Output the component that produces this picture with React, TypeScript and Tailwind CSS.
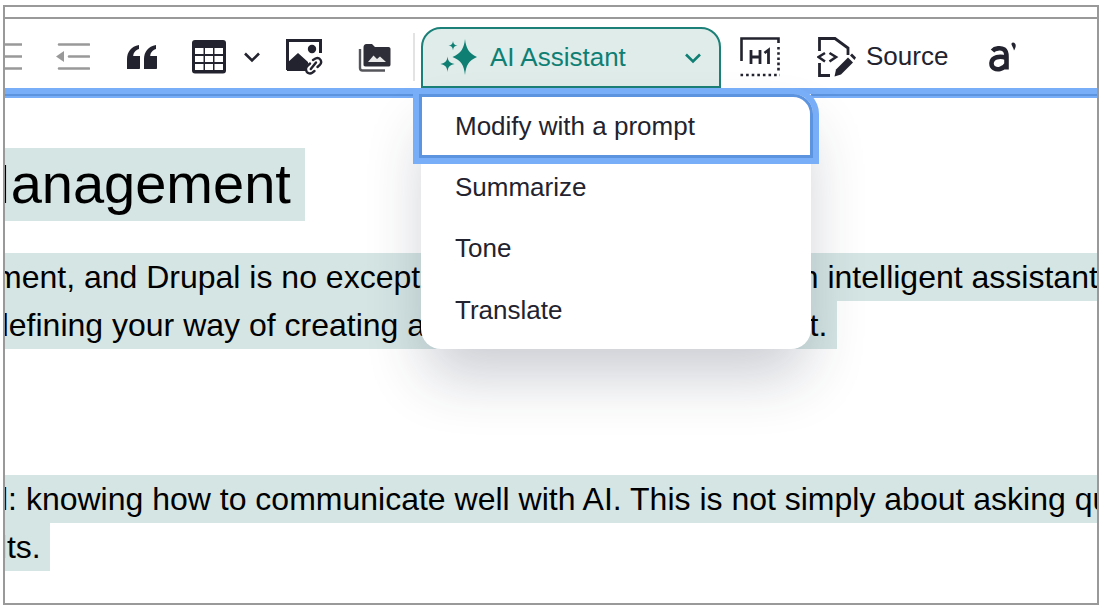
const ink = "#23232f";

function ListIcon() {
  return (
    <svg width="18" height="30" viewBox="0 0 18 30" className="shrink-0">
      <path d="M0 2.5H18M0 14.5H18M0 26.5H18" stroke="#999" strokeWidth="2.6" strokeLinecap="round" />
    </svg>
  );
}

function OutdentIcon() {
  return (
    <svg width="34" height="30" viewBox="0 0 34 30" className="shrink-0">
      <path d="M3 2.5H33M13 14.5H33M3 26.5H33" stroke="#999" strokeWidth="2.6" strokeLinecap="round" />
      <path d="M0 14.5L8 9V20Z" fill="#999" />
    </svg>
  );
}

function QuoteIcon() {
  return (
    <svg width="30" height="25" viewBox="0 0 30 25" className="shrink-0">
      <path
        d="M0 24V14C0 7 4 1.5 12 0V4C8 5.5 6.5 8 6.2 11H13V23C13 23.6 12.6 24 12 24ZM17 24V14C17 7 21 1.5 29 0V4C25 5.5 23.5 8 23.2 11H30V23C30 23.6 29.6 24 29 24Z"
        fill={ink}
      />
    </svg>
  );
}

function TableIcon() {
  return (
    <svg width="34" height="34" viewBox="0 0 34 34" className="shrink-0">
      <rect width="34" height="33.5" rx="3" fill={ink} />
      <g fill="#fff">
        <rect x="3" y="8" width="8.5" height="6" />
        <rect x="13" y="8" width="8" height="6" />
        <rect x="22.5" y="8" width="8.5" height="6" />
        <rect x="3" y="16" width="8.5" height="6" />
        <rect x="13" y="16" width="8" height="6" />
        <rect x="22.5" y="16" width="8.5" height="6" />
        <rect x="3" y="24" width="8.5" height="6" />
        <rect x="13" y="24" width="8" height="6" />
        <rect x="22.5" y="24" width="8.5" height="6" />
      </g>
    </svg>
  );
}

function Chevron({ color }: { color: string }) {
  return (
    <svg width="18" height="12" viewBox="0 0 18 12" className="shrink-0">
      <path d="M2 2.5L9 9.5L16 2.5" fill="none" stroke={color} strokeWidth="2.6" />
    </svg>
  );
}

function ImageLinkIcon() {
  return (
    <svg width="37" height="37" viewBox="0 0 37 37" className="shrink-0">
      <path d="M1.5 31V1.5H34.5V14" fill="none" stroke={ink} strokeWidth="3" />
      <path d="M1 24L12 14L22 23V25C20 27 20 29 20.5 32H1Z" fill={ink} />
      <circle cx="26" cy="10" r="4.2" fill={ink} />
      <g fill="none" stroke={ink} strokeWidth="2.4" strokeLinecap="round">
        <path d="M27 21L29.5 19.5C31.5 18.6 33.6 19.2 34.6 21C35.6 23 35 25 33.5 26.2L31.5 28" />
        <path d="M24 24.5L21.8 26.5C20 28 19.6 30.5 20.6 32.6C21.8 34.6 24.4 35 26.2 33.8L28.5 32" />
        <path d="M24.8 30L30 23.5" />
      </g>
    </svg>
  );
}

function FolderImagesIcon() {
  return (
    <svg width="33" height="29" viewBox="0 0 33 29" className="shrink-0">
      <path d="M2 6V25C2 26.5 3 27.5 4.5 27.5H27" fill="none" stroke="#55555c" strokeWidth="2.4" />
      <path d="M5.5 4.5C5.5 2.5 6.5 1 8.5 1H14L17 4H30.5C32 4 32.5 5 32.5 6V21.5C32.5 23 31.5 23.5 30.5 23.5H7.5C6 23.5 5.5 22.5 5.5 21.5Z" fill="#2e2e38" />
      <path d="M10 19L15.5 12.5L19 16L22 13.5L28 19Z" fill="#e8e8e8" />
    </svg>
  );
}

function SparkleIcon() {
  return (
    <svg width="38" height="38" viewBox="0 0 38 38" className="shrink-0">
      <g fill="#0f7f74">
        <path d="M25 0C26 9 28.5 14 37 18C28.5 21.5 26 26.5 25 36C24 26.5 21.5 21.5 12.5 18C21.5 14 24 9 25 0Z" />
        <path d="M13 2C13.4 5 14.5 6.2 17.5 6.6C14.5 7 13.4 8.2 13 11.2C12.6 8.2 11.5 7 8.5 6.6C11.5 6.2 12.6 5 13 2Z" />
        <path d="M7.5 17.5C8 22 9.5 24 14.5 25C9.5 26 8 28 7.5 33C7 28 5.5 26 0.5 25C5.5 24 7 22 7.5 17.5Z" />
      </g>
    </svg>
  );
}

function HeadingIcon() {
  return (
    <svg width="40" height="40" viewBox="0 0 40 40" className="shrink-0">
      <path d="M1.5 24V1.5H38.5V6" fill="none" stroke={ink} strokeWidth="2.6" />
      <path d="M38.5 10V34" fill="none" stroke={ink} strokeWidth="2.6" strokeDasharray="2.6 2.6" />
      <path d="M0.5 38H40" fill="none" stroke={ink} strokeWidth="2.6" strokeDasharray="2.6 3" />
      <path d="M11 13V27M20 13V27M11 20H20" fill="none" stroke={ink} strokeWidth="2.8" />
      <path d="M24.5 16L28.5 13V27" fill="none" stroke={ink} strokeWidth="2.8" />
    </svg>
  );
}

function SourceIcon() {
  return (
    <svg width="39" height="40" viewBox="0 0 39 40" className="shrink-0">
      <path d="M2.5 14V1.5H18L31 11V18M2.5 26V38.5H13" fill="none" stroke={ink} strokeWidth="2.8" />
      <path d="M8 16L1.5 20L8 24.5M12.5 16L19 20L12.5 24.5" fill="none" stroke={ink} strokeWidth="2.6" />
      <path d="M17.5 39.5L19 32.5L31 20.5L36 25.5L24 37.5Z" fill={ink} />
      <path d="M33 18.5L35 16.5L39 20.5L37.5 23Z" fill={ink} />
    </svg>
  );
}

function BrandIcon() {
  return (
    <svg width="29" height="30" viewBox="0 0 29 30" className="shrink-0">
      <path
        d="M3.5 9C6 6 12 5.5 15 7.5C18 9.5 17.5 13 17.5 17V27.5M17 16C11 13.5 3 15 2.5 21C2.2 26 7 28 11 27C14 26.3 16.5 24 17.5 22"
        fill="none"
        stroke={ink}
        strokeWidth="4.6"
      />
      <path d="M24 0.5C27.5 1 27.5 5 25 8.5C24.5 6 23 4 22.5 2.5C22.3 1.3 23 0.5 24 0.5Z" fill={ink} />
    </svg>
  );
}

const menuItems = ["Summarize", "Tone", "Translate"];

function AssistantMenu() {
  return (
    <div className="relative ml-[6px] shrink-0 self-end">
      <div className="flex h-[61px] w-[300px] items-center rounded-t-[20px] border-2 border-[#1b8077] bg-[#dfecea] px-[17px] text-[#0f7f74]">
        <SparkleIcon />
        <span className="mb-[2px] ml-[12px] text-[26px] leading-none">AI Assistant</span>
        <div className="ml-auto">
          <Chevron color="#0f7f74" />
        </div>
      </div>
      <div className="absolute left-0 top-[67px] z-10 w-[390px] rounded-b-[20px] bg-white pb-[9px] text-[26px] text-[#23232f] shadow-[0_32px_60px_-6px_rgba(35,40,65,0.24)]">
        <div className="-mx-[2px] mb-[-1px] flex h-[64px] items-center rounded-tr-[20px] border-[3px] border-[#5c94e0] pl-[33px] shadow-[0_0_0_6px_#78aef7]">
          Modify with a prompt
        </div>
        <div className="flex h-[61px] items-center pl-[34px]">{menuItems[0]}</div>
        <div className="flex h-[61px] items-center pl-[34px]">{menuItems[1]}</div>
        <div className="flex h-[61px] items-center pl-[34px] pt-[1px]">{menuItems[2]}</div>
      </div>
    </div>
  );
}

function Highlighted({ children, className }: { children: React.ReactNode; className?: string }) {
  return <div className={`w-fit whitespace-nowrap bg-[#d5e5e4] ${className ?? ""}`}>{children}</div>;
}

export default function App() {
  return (
    <div className="h-[609px] w-[1103px] overflow-hidden bg-white pl-[3px] pt-[5px] font-['Liberation_Sans',Arial,sans-serif]">
      <div className="flex h-[600px] w-[1096px] flex-col overflow-hidden border-2 border-[#999]">
        <div className="h-[12px] shrink-0 border-b-2 border-[#999]" />

        {/* toolbar */}
        <div className="flex h-[69px] shrink-0 items-center pt-[7px]">
          <div className="ml-[-1px]"><ListIcon /></div>
          <div className="ml-[34px]"><OutdentIcon /></div>
          <div className="ml-[37px]"><QuoteIcon /></div>
          <div className="ml-[35px]"><TableIcon /></div>
          <div className="ml-[17px]"><Chevron color={ink} /></div>
          <div className="ml-[25px]"><ImageLinkIcon /></div>
          <div className="ml-[35px]"><FolderImagesIcon /></div>
          <div className="ml-[22px] h-[48px] w-[2px] bg-[#e3e3e3]" />
          <AssistantMenu />
          <div className="ml-[19px]"><HeadingIcon /></div>
          <div className="ml-[37px]"><SourceIcon /></div>
          <span className="mb-[2px] ml-[10px] text-[26px] leading-none text-[#23232f]">Source</span>
          <div className="ml-[41px]"><BrandIcon /></div>
        </div>

        {/* focus band */}
        <div className="h-[6px] shrink-0 bg-[#78aef7]" />
        <div className="h-[2px] shrink-0 bg-[#5c94e0]" />
        <div className="h-[2px] shrink-0 bg-[#78aef7]" />

        {/* editor content */}
        <div className="pt-[50px] text-black">
          <Highlighted className="ml-[-41px] flex h-[73px] items-center pb-[2px] pr-[14px] text-[56px]">
            Management
          </Highlighted>
          <div className="mt-[32px] text-[32px] leading-[48px]">
            <Highlighted className="ml-[-10px]">ment, and Drupal is no exception. With AI you will have an intelligent assistant at hand</Highlighted>
            <Highlighted className="ml-[-14px] pr-[10px]">
              defining your way of creating and <span className="tracking-[1.2px]">improving your conten</span>t.
            </Highlighted>
          </div>
          <div className="mt-[126px] text-[32px] leading-[48px]">
            <Highlighted className="ml-[-4px]">l: knowing how to communicate well with AI. This is not simply about asking questions</Highlighted>
            <Highlighted className="ml-[-23px] pr-[9px]">ults.</Highlighted>
          </div>
        </div>
      </div>
    </div>
  );
}
